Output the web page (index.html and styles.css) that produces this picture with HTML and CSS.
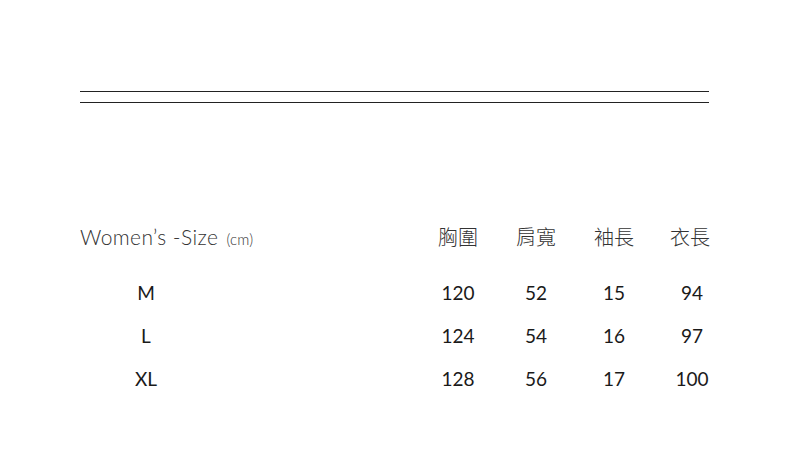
FILE: index.html
```html
<!DOCTYPE html>
<html lang="zh-Hant">
<head>
<meta charset="utf-8">
<link rel="stylesheet" href="styles.css">
</head>
<body>
<div class="page">
  <div class="rule"></div>
  <div class="table">
    <div class="title">Women’s -Size <span class="unit">(cm)</span></div>
    <div class="hd">胸圍</div>
    <div class="hd">肩寬</div>
    <div class="hd">袖長</div>
    <div class="hd hd-last">衣長</div>

    <div class="size">M</div><div></div>
    <div class="num">120</div><div class="num">52</div><div class="num">15</div><div class="num">94</div>

    <div class="size">L</div><div></div>
    <div class="num">124</div><div class="num">54</div><div class="num">16</div><div class="num">97</div>

    <div class="size">XL</div><div></div>
    <div class="num">128</div><div class="num">56</div><div class="num">17</div><div class="num">100</div>
  </div>
</div>
</body>
</html>
```
FILE: styles.css
```css
html, body {
  margin: 0;
  padding: 0;
  background: #fff;
}
.page {
  padding: 91px 81px 0 80px;
  font-family: "Lato", "Noto Sans CJK TC", sans-serif;
  color: #222;
}
.rule {
  height: 10px;
  border-top: 1px solid #222;
  border-bottom: 1px solid #222;
}
.table {
  margin-top: 99px;
  display: grid;
  grid-template-columns: 132px 207px repeat(4, 78px);
  grid-template-rows: 69px repeat(3, 43px);
  align-items: center;
}
.title {
  grid-column: 1 / 3;
  font-size: 21px;
  font-weight: 300;
  color: #333;
  letter-spacing: 0.4px;
  line-height: 1;
}
.unit {
  font-size: 15px;
  margin-left: 2px;
  letter-spacing: 0.2px;
}
.hd {
  text-align: center;
  font-family: "Noto Sans CJK TC", sans-serif;
  font-size: 20px;
  font-weight: 300;
  color: #333;
  line-height: 1;
}
.hd-last {
  padding-right: 4px;
}
.size, .num {
  text-align: center;
  font-size: 19px;
  font-weight: 400;
  color: #1a1a1a;
  line-height: 1;
}
```
